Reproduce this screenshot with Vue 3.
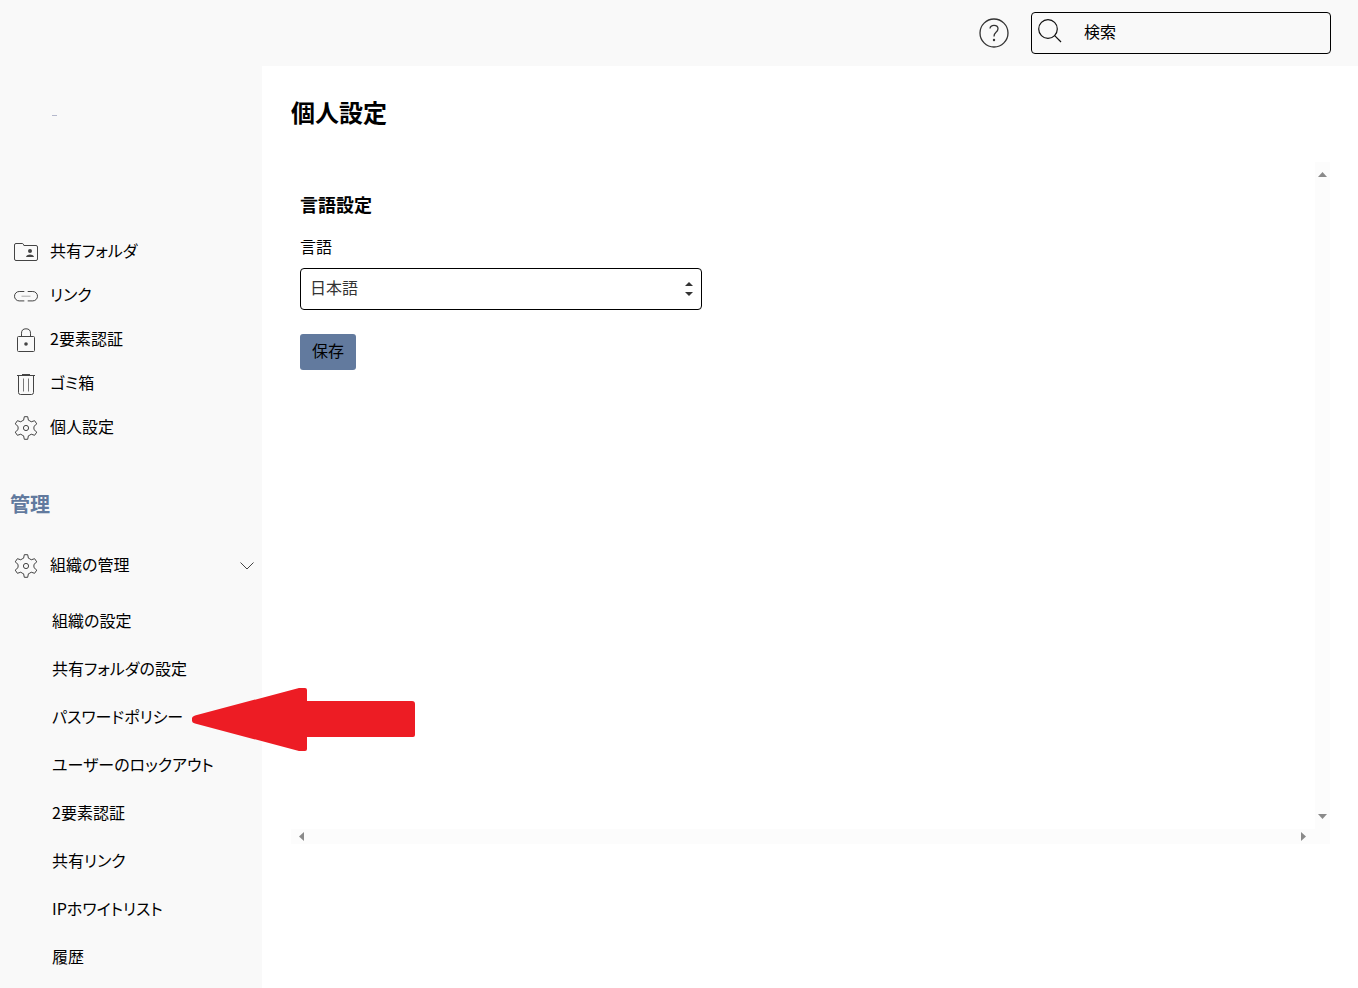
<script setup>
import { ref } from 'vue';

const keyword = ref("")
const language = ref("ja")
const orgOpen = ref(true)

const menuItems = [
    { icon: 'folder', label: '共有フォルダ' },
    { icon: 'link', label: 'リンク' },
    { icon: 'lock', label: '2要素認証' },
    { icon: 'trash', label: 'ゴミ箱' },
    { icon: 'gear', label: '個人設定' },
]

const orgItems = [
    { label: '組織の設定' },
    { label: '共有フォルダの設定' },
    { label: 'パスワードポリシー', pointed: true },
    { label: 'ユーザーのロックアウト' },
    { label: '2要素認証' },
    { label: '共有リンク' },
    { label: 'IPホワイトリスト' },
    { label: '履歴' },
]

const gearPath = 'M10.3 .7 H13.7 L14.4 4.2 Q16 4.8 17.2 5.8 L20.6 4.7 L22.8 7.9 L20.1 10.2 Q19.6 12 20.1 13.8 L22.8 16.1 L20.6 19.3 L17.2 18.2 Q16 19.2 14.4 19.8 L13.7 23.3 H10.3 L9.6 19.8 Q8 19.2 6.8 18.2 L3.4 19.3 L1.2 16.1 L3.9 13.8 Q4.4 12 3.9 10.2 L1.2 7.9 L3.4 4.7 L6.8 5.8 Q8 4.8 9.6 4.2 Z'
</script>

<template>
    <div class="page">
        <header class="topbar">
            <button class="help-btn" type="button" aria-label="ヘルプ">
                <svg width="30" height="30" viewBox="0 0 30 30">
                    <circle cx="15" cy="15" r="14" />
                    <path d="M11 10.5 Q11.4 7.3 15 7.3 Q19 7.3 19 10.8 Q19 12.6 17 14.2 Q15 15.8 15 18.6" />
                    <circle class="dot" cx="15" cy="22" r="1.2" />
                </svg>
            </button>
            <label class="search">
                <svg width="24" height="24" viewBox="0 0 24 24">
                    <circle cx="10" cy="10" r="9.3" />
                    <path d="M16.7 16.7 L23 23" />
                </svg>
                <input type="text" v-model="keyword" placeholder="検索" aria-label="検索">
            </label>
        </header>

        <div class="body">
            <aside class="sidebar">
                <div class="account"><span class="account-mark"></span></div>
                <nav>
                    <a v-for="item in menuItems" :key="item.label" class="menu-item" href="#">
                        <svg width="24" height="24" viewBox="0 0 24 24">
                            <template v-if="item.icon == 'folder'">
                                <path d="M.5 5 Q.5 3.5 2 3.5 H8.3 Q9 3.5 9.3 4.1 L9.9 5.5 H22 Q23.5 5.5 23.5 7 V19 Q23.5 20.5 22 20.5 H2 Q.5 20.5 .5 19 Z" />
                                <circle class="fill" cx="16" cy="11" r="2" />
                                <path class="fill" d="M12 17 Q12.5 14.5 16 14.5 Q19.5 14.5 20 17 Z" />
                            </template>
                            <template v-else-if="item.icon == 'link'">
                                <path d="M10.3 7.5 H5.2 A4.7 4.7 0 0 0 5.2 16.9 H10.3 M13.7 7.5 H18.8 A4.7 4.7 0 0 1 18.8 16.9 H13.7" />
                                <path class="soft" d="M7.5 12.2 H16.5" />
                            </template>
                            <template v-else-if="item.icon == 'lock'">
                                <rect x="3.5" y="8.5" width="17" height="15" rx="1" />
                                <path d="M7.5 8.5 V5.2 Q7.5 .8 12 .8 Q16.5 .8 16.5 5.2 V8.5" />
                                <circle class="fill" cx="12" cy="16" r="1.8" />
                            </template>
                            <template v-else-if="item.icon == 'trash'">
                                <path d="M3 3.5 H21 M8 2.5 H16 M4.5 3.5 V20.5 Q4.5 22.5 6.5 22.5 H17.5 Q19.5 22.5 19.5 20.5 V3.5" />
                                <path class="bars" d="M9.5 6.5 V19.5 M14.5 6.5 V19.5" />
                            </template>
                            <template v-else>
                                <path :d="gearPath" />
                                <circle cx="12" cy="12" r="2.6" />
                            </template>
                        </svg>
                        <span>{{ item.label }}</span>
                    </a>

                    <h2 class="menu-title">管理</h2>

                    <button class="menu-item" type="button" :aria-expanded="orgOpen" @click="orgOpen = !orgOpen">
                        <svg width="24" height="24" viewBox="0 0 24 24">
                            <path :d="gearPath" />
                            <circle cx="12" cy="12" r="2.6" />
                        </svg>
                        <span>組織の管理</span>
                        <svg class="chevron" width="14" height="8" viewBox="0 0 14 8">
                            <path d="M.5 .5 L7 7 L13.5 .5" />
                        </svg>
                    </button>
                    <ul class="sub-menu" v-show="orgOpen">
                        <li v-for="item in orgItems" :key="item.label">
                            <a href="#">{{ item.label }}</a>
                            <svg v-if="item.pointed" class="pointer" width="223" height="63" viewBox="0 0 223 63">
                                <path d="M0 30 Q0 28.5 3 27.5 L107 0 H113 Q115 0 115 2 V13 H220 Q223 13 223 16 V47 Q223 49 221 49 H115 V61 Q115 63 113 63 H107 L3 35.5 Q0 34.5 0 33 Z" />
                            </svg>
                        </li>
                    </ul>
                </nav>
            </aside>

            <main class="content">
                <h1>個人設定</h1>
                <div class="panel">
                    <form class="settings" @submit.prevent>
                        <h3>言語設定</h3>
                        <label for="language">言語</label>
                        <div class="select-wrap">
                            <select id="language" v-model="language">
                                <option value="ja">日本語</option>
                                <option value="en">English</option>
                            </select>
                            <svg width="8" height="14" viewBox="0 0 8 14">
                                <path d="M0 4 L4 0 L8 4 Z M0 10 L4 14 L8 10 Z" />
                            </svg>
                        </div>
                        <button class="save-btn" type="submit">保存</button>
                    </form>
                    <div class="track vertical">
                        <svg width="9" height="5" viewBox="0 0 9 5"><path d="M0 5 L4.5 0 L9 5 Z" /></svg>
                        <svg width="9" height="5" viewBox="0 0 9 5"><path d="M0 0 L4.5 5 L9 0 Z" /></svg>
                    </div>
                    <div class="track horizontal">
                        <svg width="5" height="9" viewBox="0 0 5 9"><path d="M5 0 L0 4.5 L5 9 Z" /></svg>
                        <svg width="5" height="9" viewBox="0 0 5 9"><path d="M0 0 L5 4.5 L0 9 Z" /></svg>
                    </div>
                </div>
            </main>
        </div>
    </div>
</template>

<style>
body {
    margin: 0;
    background-color: #fff;
}
</style>

<style scoped>
* {
    box-sizing: border-box;
}

.page {
    display: flex;
    flex-direction: column;
    min-height: 100vh;
    font-family: "Noto Sans CJK JP", sans-serif;
    font-feature-settings: "palt";
    font-size: 16px;
    line-height: 24px;
    color: #000;
}

button, input, select {
    font: inherit;
    font-feature-settings: inherit;
    color: inherit;
}

svg {
    display: block;
    flex-shrink: 0;
    fill: none;
    stroke: #444;
    stroke-width: 1;
}

.topbar {
    display: flex;
    justify-content: flex-end;
    align-items: center;
    gap: 22px;
    height: 66px;
    padding-right: 27px;
    background-color: #f9f9f9;
}

.help-btn {
    padding: 0;
    border: none;
    background: none;
    cursor: pointer;
}
.help-btn svg {
    stroke: #333;
    stroke-width: 1.3;
}
.help-btn .dot {
    fill: #333;
    stroke: none;
}

.search {
    display: flex;
    width: 300px;
    height: 42px;
    padding: 6px;
    border: 1px solid #000;
    border-radius: 4px;
}
.search svg {
    stroke: #111;
    stroke-width: 1.2;
}
.search input {
    flex: 1;
    min-width: 0;
    height: 24px;
    margin-left: 16px;
    padding: 0 6px;
    border: none;
    outline: none;
    background: none;
}
.search input::placeholder {
    color: #000;
    opacity: 1;
}

.body {
    display: flex;
    flex: 1;
}

.sidebar {
    width: 262px;
    flex-shrink: 0;
    background-color: #f9f9f9;
}
.account {
    height: 162px;
    padding: 49px 52px;
}
.account-mark {
    display: block;
    width: 5px;
    height: 1px;
    background-color: #b4b8cc;
}

.menu-item {
    display: flex;
    align-items: center;
    gap: 12px;
    width: 100%;
    height: 44px;
    padding: 0 8px 0 14px;
    border: none;
    background: none;
    color: #000;
    text-decoration: none;
    text-align: left;
    cursor: pointer;
}
.menu-item svg {
    margin-top: 4px;
}
.menu-item .fill {
    fill: #444;
    stroke: none;
}
.menu-item .soft {
    stroke: #aaa;
}
.menu-item .bars {
    stroke: #777;
}
.menu-item .chevron {
    margin-left: auto;
}

.menu-title {
    margin: 42px 0 24px;
    padding-left: 10px;
    font-size: 20px;
    line-height: 28px;
    font-weight: bold;
    color: #627a9e;
}

.sub-menu {
    margin: 10px 0 0;
    padding: 0;
    list-style: none;
}
.sub-menu li {
    position: relative;
    padding-left: 52px;
}
.sub-menu a {
    display: block;
    line-height: 48px;
    color: #000;
    text-decoration: none;
}
/* red arrow lies over the sidebar edge and the content */
.pointer {
    position: absolute;
    left: 192px;
    top: -4px;
    z-index: 5;
    fill: #ed1c24;
    stroke: none;
    pointer-events: none;
}

.content {
    flex: 1;
    min-width: 0;
    padding: 30px 28px 0 29px;
}
h1 {
    margin: 0 0 34px;
    font-size: 24px;
    line-height: 32px;
    font-weight: bold;
}

.panel {
    display: grid;
    grid-template-columns: 1fr 15px;
    grid-template-rows: 667px 15px;
}
.settings {
    padding: 30px 9px;
}
.settings h3 {
    margin: 0 0 18px;
    font-size: 18px;
    line-height: 24px;
    font-weight: bold;
}
.settings label {
    display: block;
    margin-bottom: 10px;
}

.select-wrap {
    position: relative;
    max-width: 402px;
}
.select-wrap select {
    display: block;
    width: 100%;
    height: 42px;
    padding: 0 28px 4px 9px;
    border: 1px solid #000;
    border-radius: 4px;
    appearance: none;
    background-color: #fff;
    color: #333;
}
.select-wrap svg {
    position: absolute;
    right: 9px;
    top: 14px;
    fill: #333;
    stroke: none;
    pointer-events: none;
}

.save-btn {
    width: 56px;
    height: 36px;
    margin-top: 24px;
    padding: 0 0 4px;
    border: none;
    border-radius: 3px;
    background-color: #627a9e;
    cursor: pointer;
}

.track {
    display: flex;
    justify-content: space-between;
    align-items: center;
    background-color: #fcfcfc;
}
.track svg {
    fill: #8a8a8a;
    stroke: none;
}
.vertical {
    flex-direction: column;
    padding: 10px 0;
}
.horizontal {
    grid-column: 1 / -1;
    padding: 0 24px 0 8px;
}
</style>
